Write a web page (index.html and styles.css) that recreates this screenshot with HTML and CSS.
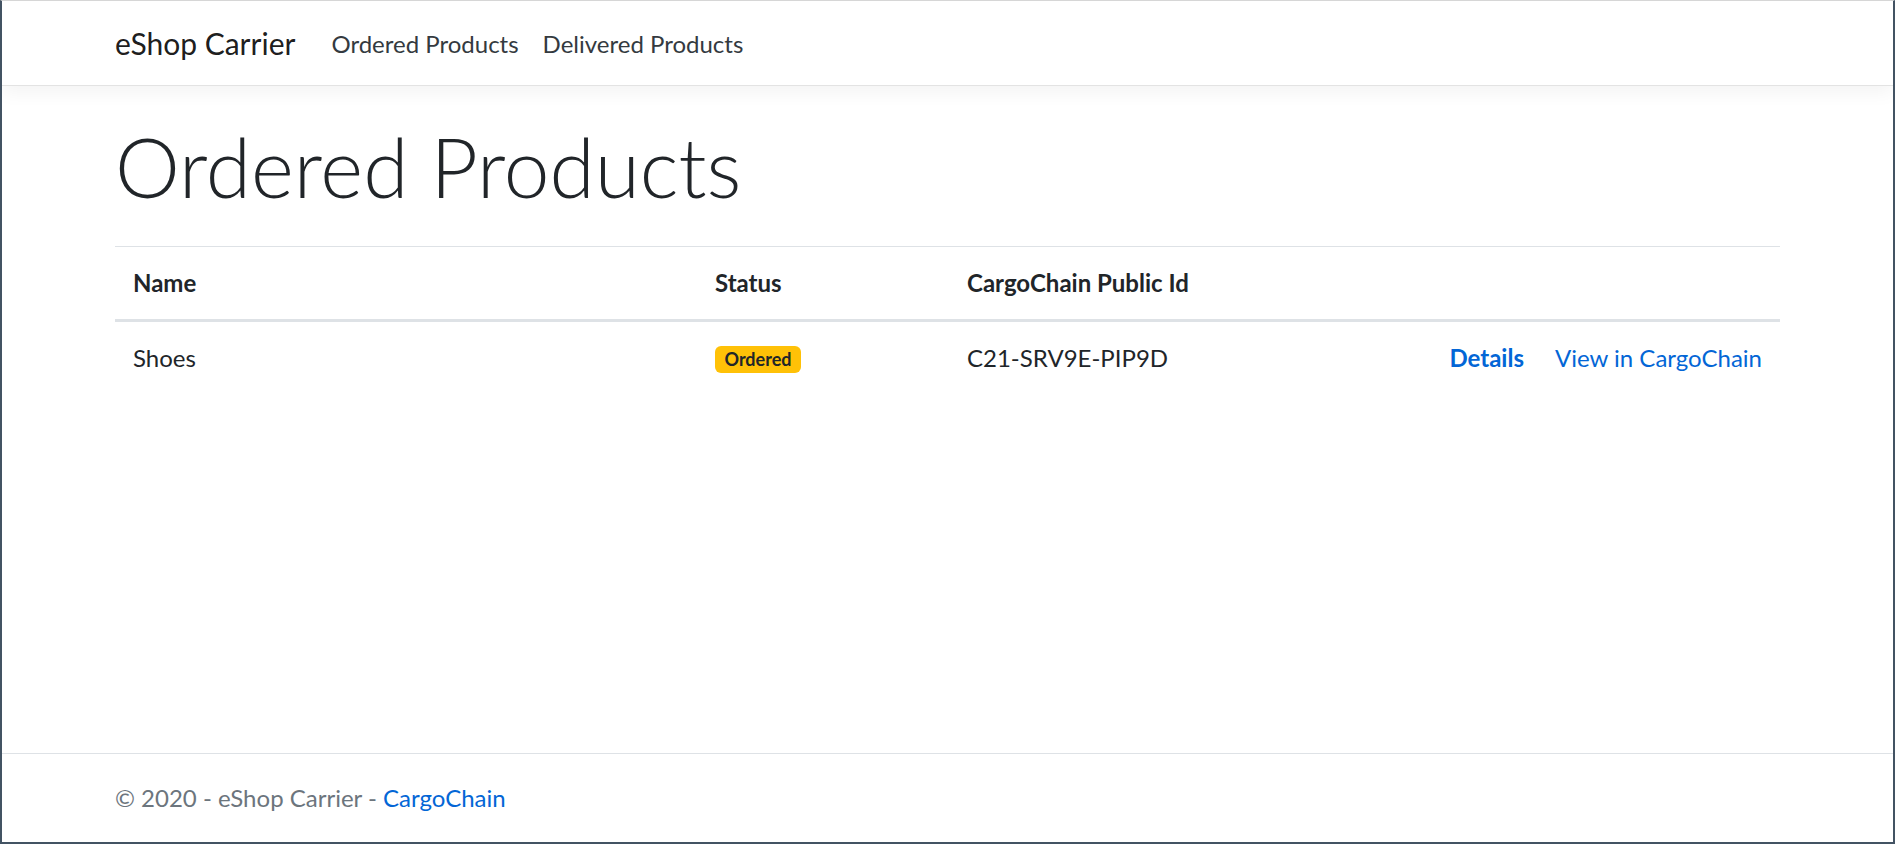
FILE: index.html
```html
<!DOCTYPE html>
<html lang="en">
<head>
<meta charset="utf-8">
<title>Ordered Products - eShop Carrier</title>
<link rel="stylesheet" href="styles.css">
</head>
<body>
<div class="frame">
  <header class="navbar">
    <div class="container nav-inner">
      <a class="brand" href="#">eShop Carrier</a>
      <nav class="nav-links">
        <a class="nav-link" href="#">Ordered Products</a>
        <a class="nav-link" href="#">Delivered Products</a>
      </nav>
    </div>
  </header>
  <main class="container main">
    <h1 class="display">Ordered Products</h1>
    <table class="table">
      <thead>
        <tr>
          <th class="col-name">Name</th>
          <th class="col-status">Status</th>
          <th class="col-id">CargoChain Public Id</th>
          <th class="col-actions"></th>
        </tr>
      </thead>
      <tbody>
        <tr>
          <td>Shoes</td>
          <td><span class="badge">Ordered</span></td>
          <td>C21-SRV9E-PIP9D</td>
          <td class="actions"><a class="link strong" href="#">Details</a><a class="link second" href="#">View in CargoChain</a></td>
        </tr>
      </tbody>
    </table>
  </main>
  <footer class="footer">
    <div class="container">&copy; 2020 - eShop Carrier - <a class="link" href="#">CargoChain</a></div>
  </footer>
</div>
</body>
</html>
```
FILE: styles.css
```css
* { box-sizing: border-box; }
html, body { margin: 0; padding: 0; }
body {
  font-family: Lato, "Open Sans", "Liberation Sans", sans-serif;
  font-size: 24px;
  line-height: 1.5;
  color: #212529;
  background: #ffffff;
}
a { text-decoration: none; }

.frame {
  height: 844px;
  display: flex;
  flex-direction: column;
  border-top: 1px solid #d6d6d6;
  border-left: 2px solid #435363;
  border-right: 2px solid #435363;
  border-bottom: 2px solid #435363;
  overflow: hidden;
}

.container {
  width: 1710px;
  margin: 0 auto;
  padding: 0 22.5px;
}

.navbar {
  padding: 12px 0;
  background: #fff;
  border-bottom: 1px solid #e3e3e3;
  box-shadow: 0 6px 18px rgba(0, 0, 0, 0.05);
  position: relative;
  z-index: 1;
}
.nav-inner {
  display: flex;
  align-items: center;
}
.brand {
  font-size: 30px;
  line-height: 45px;
  padding: 7.5px 0;
  margin-right: 24px;
  color: rgba(0, 0, 0, 0.9);
}
.nav-links { display: flex; }
.nav-link {
  padding: 13px 12px 11px;
  line-height: 36px;
  color: #343a40;
}

.main {
  padding-top: 24px;
  padding-bottom: 24px;
}
.display {
  font-size: 82px;
  font-weight: 300;
  line-height: 1.2;
  padding-top: 7px;
  margin: 0 0 31px 0;
}

.table {
  width: 100%;
  border-collapse: collapse;
  margin-bottom: 24px;
}
.table th, .table td {
  padding: 18px;
  text-align: left;
  vertical-align: top;
  border-top: 1px solid #dee2e6;
}
.table th {
  font-weight: 700;
  border-bottom: 3px solid #dee2e6;
}
.col-name { width: 582px; }
.col-status { width: 252px; }
.col-id { width: 482px; }
.col-actions { width: 349px; }

.badge {
  display: inline-block;
  background: #ffc107;
  color: #212529;
  font-size: 18px;
  font-weight: 700;
  line-height: 1;
  padding: 4.5px 9.5px;
  border-radius: 6px;
  vertical-align: 1px;
}

.table td.actions {
  white-space: nowrap;
  text-align: right;
}
.link { color: #0366d6; }
.strong { font-weight: 700; }
.second { margin-left: 31px; }

.footer {
  margin-top: auto;
  border-top: 1px solid #dee2e6;
  line-height: 88px;
  color: #6c757d;
  white-space: nowrap;
}
```
